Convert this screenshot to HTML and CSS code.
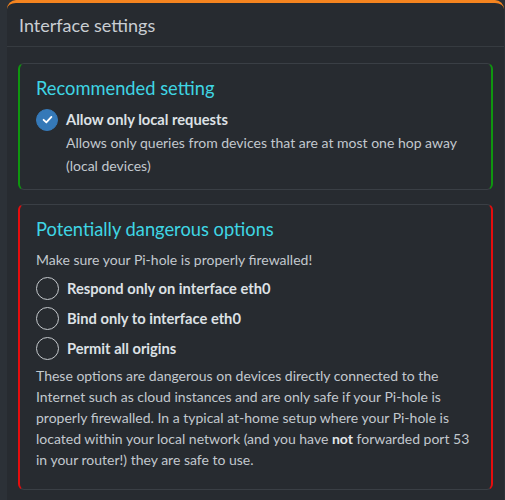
FILE: index.html
```html
<!DOCTYPE html>
<html>
<head>
<meta charset="utf-8">
<link rel="stylesheet" href="styles.css">
</head>
<body>
<div class="card">
  <div class="card-header"><h3 class="card-title">Interface settings</h3></div>
  <div class="card-body">
    <div class="panel panel-ok">
      <h4 class="panel-title">Recommended setting</h4>
      <div class="option">
        <span class="check checked"><svg viewBox="0 0 20 20" width="13" height="13"><path d="M4 10.5 L8.2 14.5 L16 6" fill="none" stroke="#fff" stroke-width="2.8" stroke-linecap="round" stroke-linejoin="round"/></svg></span>
        <div class="option-text">
          <div class="label">Allow only local requests</div>
          <div class="desc">Allows only queries from devices that are at most one hop away (local devices)</div>
        </div>
      </div>
    </div>
    <div class="panel panel-danger">
      <h4 class="panel-title">Potentially dangerous options</h4>
      <p class="note">Make sure your Pi-hole is properly firewalled!</p>
      <div class="option radio-row"><span class="check"></span><span class="label">Respond only on interface eth0</span></div>
      <div class="option radio-row"><span class="check"></span><span class="label">Bind only to interface eth0</span></div>
      <div class="option radio-row"><span class="check"></span><span class="label">Permit all origins</span></div>
      <p class="info">These options are dangerous on devices directly connected to the Internet such as cloud instances and are only safe if your Pi-hole is properly firewalled. In a typical at-home setup where your Pi-hole is located within your local network (and you have <strong>not</strong> forwarded port 53 in your router!) they are safe to use.</p>
    </div>
  </div>
</div>
</body>
</html>
```

FILE: styles.css
```css
* { box-sizing: border-box; }
html, body { height: 100%; }
body {
  margin: 0;
  background: #2c3137;
  font-family: "Lato", "Liberation Sans", sans-serif;
  font-size: 14px;
  color: #c2c8ce;
  overflow: hidden;
}
.card {
  margin-left: 7px;
  width: 497px;
  min-height: 520px;
  background: #272b30;
  border-top: 3px solid #f5841f;
  border-radius: 9px 9px 0 0;
}
.card-header {
  height: 44px;
  padding: 0 12px;
  display: flex;
  align-items: center;
  border-bottom: 1px solid #363b40;
}
.card-title {
  margin: 0;
  font-weight: 400;
  font-size: 18px;
  color: #c9ced3;
}
.card-body {
  padding: 16px 11px 0 11px;
  display: flex;
  flex-direction: column;
  gap: 14px;
}
.panel {
  border-top: 1px solid #3a3f45;
  border-bottom: 1px solid #3a3f45;
  border-left: 2px solid;
  border-right: 2px solid;
  border-radius: 6px;
  padding: 12px 16px 12px 16px;
}
.panel-ok { border-left-color: #0f960f; border-right-color: #0f960f; }
.panel-danger { border-left-color: #e50d0d; border-right-color: #e50d0d; padding-bottom: 19px; }
.panel-title {
  margin: 0 0 8px 0;
  font-weight: 400;
  font-size: 18.3px;
  line-height: 24px;
  color: #3fd6e4;
}
.option {
  display: flex;
  align-items: flex-start;
  gap: 8px;
}
.check {
  flex: none;
  width: 22px;
  height: 22px;
  border-radius: 50%;
  border: 1.5px solid #c4c8cc;
  display: flex;
  align-items: center;
  justify-content: center;
}
.check.checked {
  background: #3579b8;
  border-color: #3579b8;
  margin-top: 0.5px;
}
.option-text { line-height: 23px; }
.label { font-weight: 700; font-size: 14.7px; color: #dde1e5; line-height: 23px; }
.desc { line-height: 23px; }
.note { margin: 0 0 2px 0; line-height: 22px; }
.radio-row { height: 30px; align-items: center; }
.radio-row .check { width: 23px; height: 23px; }
.info { margin: 2px 0 0 0; line-height: 21px; }
.info strong { color: #e4e7ea; }
```
